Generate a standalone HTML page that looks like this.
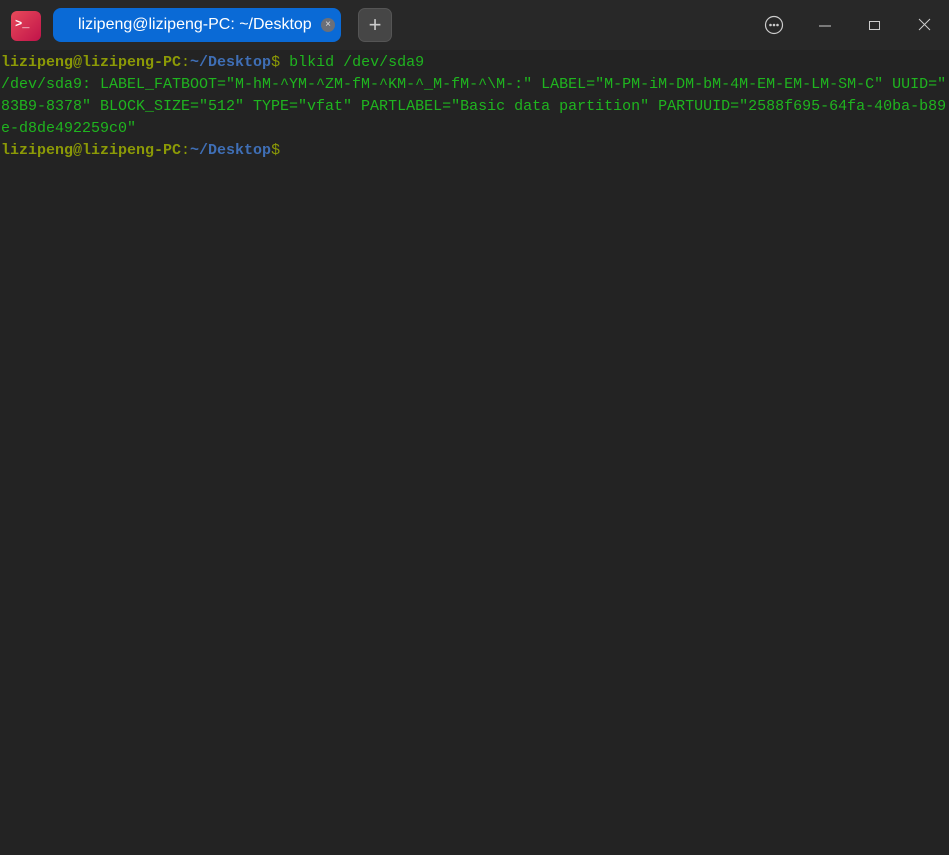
<!DOCTYPE html>
<html><head><meta charset="utf-8"><style>
html,body{margin:0;padding:0;width:949px;height:855px;overflow:hidden;background:#232323}
.tb{position:absolute;left:0;top:0;width:949px;height:50px;background:#282828}
.logo{position:absolute;left:11px;top:11px;width:30px;height:30px;border-radius:6px;background:linear-gradient(135deg,#e84a5a,#c0134a);color:#fff;font:bold 12px "Liberation Mono",monospace;line-height:26px;text-indent:4px}
.tab{position:absolute;left:53px;top:8px;width:288px;height:34px;border-radius:8px;background:#0a6ad6;color:#fff;font:16px "Liberation Sans",sans-serif;line-height:34px}
.tab span{position:absolute;left:25px}
.x{position:absolute;right:6px;top:10px;width:14px;height:14px;border-radius:7px;background:#6b6f78;color:#ddd;font-size:10px;line-height:14px;text-align:center}
.plus{position:absolute;left:358px;top:8px;width:34px;height:34px;border-radius:7px;background:#464646;border:1px solid #555;box-sizing:border-box;color:#ccc;font:22px "Liberation Sans",sans-serif;text-align:center;line-height:31px}
pre{position:absolute;left:1px;top:52px;margin:0;font:15px "Liberation Mono",monospace;line-height:22px;color:#1fb51f;white-space:pre}
.u{color:#8c9a06;font-weight:bold}.p{color:#3f6fb6;font-weight:bold}.c{color:#8c9a06}
</style></head><body>
<div class="tb">
<div class="logo">&gt;_</div>
<div class="tab"><span>lizipeng@lizipeng-PC: ~/Desktop</span><div class="x">×</div></div>
<div class="plus">+</div>
<svg style="position:absolute;left:764px;top:15px" width="20" height="20"><circle cx="10" cy="10" r="8.5" fill="none" stroke="#ccc" stroke-width="1.2"/><circle cx="6.5" cy="10" r="1.3" fill="#ccc"/><circle cx="10" cy="10" r="1.3" fill="#ccc"/><circle cx="13.5" cy="10" r="1.3" fill="#ccc"/></svg>
<svg style="position:absolute;left:819px;top:20px" width="14" height="10"><line x1="0" y1="6" x2="12" y2="6" stroke="#ccc" stroke-width="1"/></svg>
<svg style="position:absolute;left:869px;top:20px" width="12" height="12"><rect x="0.5" y="1.5" width="10" height="8" fill="none" stroke="#ccc" stroke-width="1"/></svg>
<svg style="position:absolute;left:918px;top:18px" width="14" height="14"><path d="M1 1L12 12M12 1L1 12" stroke="#ccc" stroke-width="1"/></svg>
</div>
<pre><span class="u">lizipeng@lizipeng-PC</span><span class="c">:</span><span class="p">~/Desktop</span><span class="c">$</span> blkid /dev/sda9
/dev/sda9: LABEL_FATBOOT="M-hM-^YM-^ZM-fM-^KM-^_M-fM-^\M-:" LABEL="M-PM-iM-DM-bM-4M-EM-EM-LM-SM-C" UUID="
83B9-8378" BLOCK_SIZE="512" TYPE="vfat" PARTLABEL="Basic data partition" PARTUUID="2588f695-64fa-40ba-b89
e-d8de492259c0"
<span class="u">lizipeng@lizipeng-PC</span><span class="c">:</span><span class="p">~/Desktop</span><span class="c">$</span></pre>
</body></html>
